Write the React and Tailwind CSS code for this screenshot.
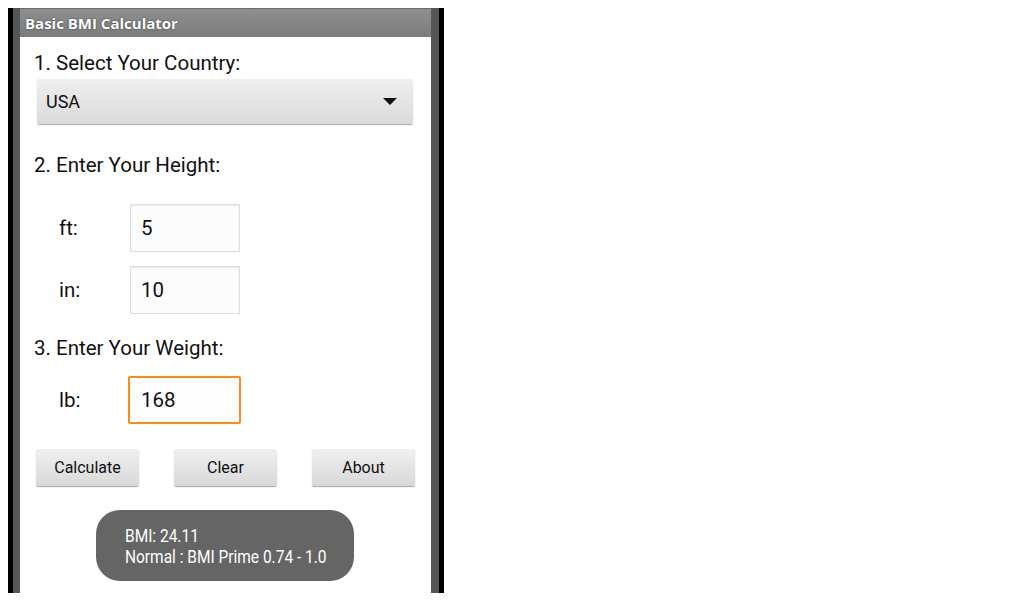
import React, { useState } from 'react';

const body = { fontFamily: 'Roboto, "Noto Sans", sans-serif' };

const Field = ({ label, value, focused, onChange }) => (
    <div className="flex items-center pl-[39px]">
        <div className={`${focused ? 'w-[69px]' : 'w-[71px]'} text-[20.5px] text-[#111]`}>{label}</div>
        <input
            value={value}
            onChange={(e) => onChange(e.target.value)}
            className={
                focused
                    ? 'w-[113px] h-[48px] pl-[11px] text-[20.5px] text-[#111] bg-[#fdfdfd] border-2 border-[#fb8c14] rounded-[2px] outline-none'
                    : 'w-[110px] h-[48px] pl-[10px] text-[20.5px] text-[#111] bg-[#fcfcfc] border border-[#dedede] shadow-[inset_0_1px_2px_rgba(0,0,0,0.08)] outline-none'
            }
        />
    </div>
);

const Button = ({ children }) => (
    <button className="w-[103px] h-[37px] text-[16px] text-[#111] rounded-[2px] bg-gradient-to-b from-[#f0f0f0] to-[#d8d8d8] shadow-[0_1px_1px_rgba(0,0,0,0.35)]">
        {children}
    </button>
);

export default function App() {
    const [ft, setFt] = useState('5');
    const [inch, setInch] = useState('10');
    const [lb, setLb] = useState('168');

    return (
        <div className="w-[1024px] h-[600px] bg-white pl-2 pt-2 overflow-hidden" style={body}>
            <div className="flex h-[585px] w-[436px]">
                <div className="w-[5px] bg-black" />
                <div className="w-[7px] bg-[#565656]" />

                <div className="w-[411px] flex flex-col bg-white">
                    {/* action bar */}
                    <div className="h-[29px] border-t border-[#6a6a6a] bg-gradient-to-b from-[#8f8f8f] to-[#7b7b7b] flex items-center pl-[5px]">
                        <span
                            className="text-white text-[15px] font-bold [text-shadow:0_0_2px_rgba(0,0,0,0.6)]"
                            style={{ fontFamily: '"Open Sans", "Liberation Sans", sans-serif' }}
                        >
                            Basic BMI Calculator
                        </span>
                    </div>

                    <div className="mt-[14px] pl-[14px] text-[20.5px] leading-[24px] text-[#111]">1. Select Your Country:</div>

                    <div className="mt-[4px] ml-[17px] w-[376px] h-[45px] flex items-center justify-between pl-[9px] pr-[16px] rounded-[2px] bg-gradient-to-b from-[#efefef] to-[#dadada] shadow-[0_1px_1px_rgba(0,0,0,0.35)]">
                        <span className="text-[18px] text-[#111]">USA</span>
                        <svg width="14" height="7" viewBox="0 0 14 7">
                            <path d="M0 0h14L7 7z" fill="#111" />
                        </svg>
                    </div>

                    <div className="mt-[29px] pl-[14px] text-[20.5px] leading-[24px] text-[#111]">2. Enter Your Height:</div>

                    <div className="mt-[27px] flex flex-col gap-[14px]">
                        <Field label="ft:" value={ft} onChange={setFt} />
                        <Field label="in:" value={inch} onChange={setInch} />
                    </div>

                    <div className="mt-[22px] pl-[14px] text-[20.5px] leading-[24px] text-[#111]">3. Enter Your Weight:</div>

                    <div className="mt-[16px]">
                        <Field label="lb:" value={lb} focused onChange={setLb} />
                    </div>

                    <div className="mt-[25px] pl-4 flex gap-[35px]">
                        <Button>Calculate</Button>
                        <Button>Clear</Button>
                        <Button>About</Button>
                    </div>

                    <div className="mt-[24px] ml-[76px] w-[258px] h-[71px] rounded-[24px] bg-[#656565] flex flex-col justify-center pl-[29px] text-white text-[18px] leading-[21px]">
                        <span className="origin-left scale-x-[0.86] whitespace-nowrap">BMI: 24.11</span>
                        <span className="origin-left scale-x-[0.86] whitespace-nowrap">Normal : BMI Prime 0.74 - 1.0</span>
                    </div>
                </div>

                <div className="w-[8px] bg-[#565656]" />
                <div className="w-[5px] bg-black" />
            </div>
        </div>
    );
}
